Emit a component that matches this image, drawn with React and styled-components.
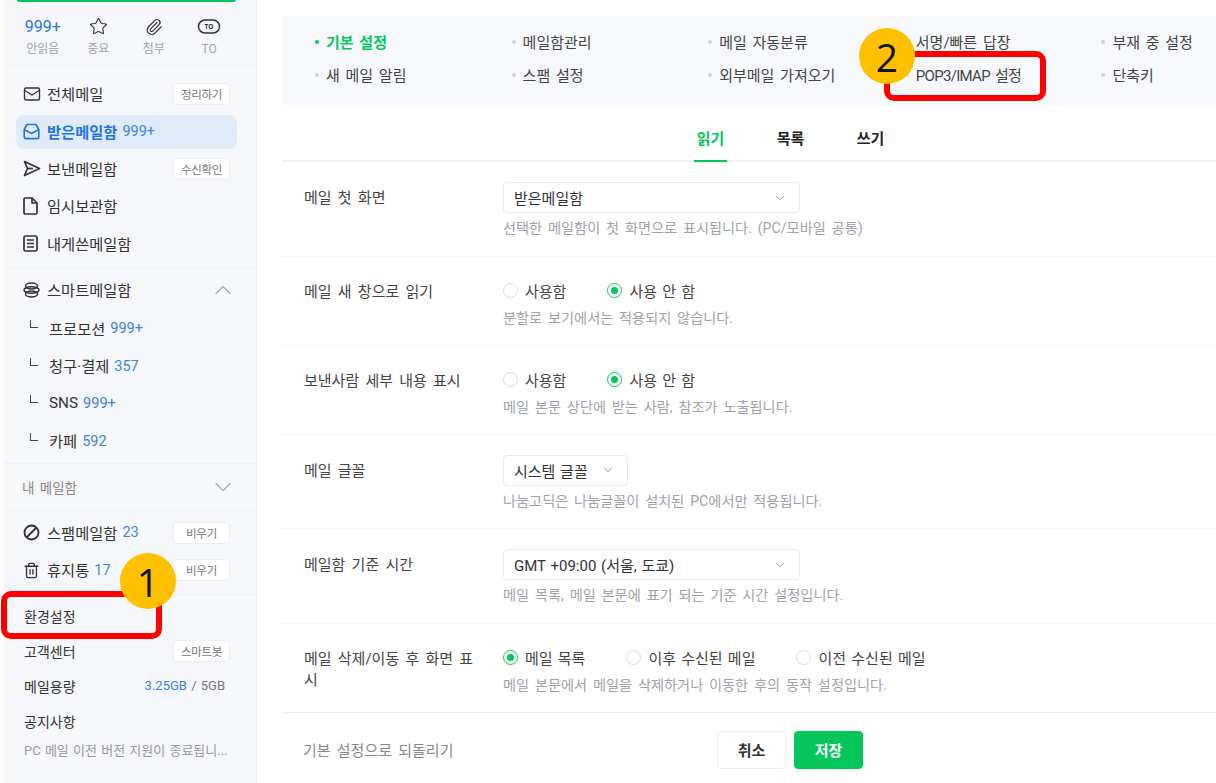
import React from 'react';
import styled, { createGlobalStyle } from 'styled-components';
import { ChevronDown, ChevronUp, Mail, Paperclip, Star, Trash2 } from 'lucide-react';

const GlobalStyle = createGlobalStyle`
  html, body {
    margin: 0;
    height: 783px;
    overflow: hidden;
    background: #fff;
    font-family: Roboto, "Noto Sans CJK KR", sans-serif;
    color: #333;
  }
  * { box-sizing: border-box; }
`;

const Page = styled.div`
  position: relative;
  display: flex;
  width: 1216px;
  height: 783px;
  overflow: hidden;
  background: #fff;
`;

// Left mail navigation
const Sidebar = styled.aside`
  width: 254px;
  height: 783px;
  margin-left: 3px;
  flex-shrink: 0;
  background: #f6f7fb;
  border-right: 1px solid #eceef3;
`;

const WriteBar = styled.div`
  height: 2px;
  margin: 0 20px 0 14px;
  background: #03c75a;
  border-radius: 0 0 2px 2px;
`;

const QuickRow = styled.div`
  display: flex;
  height: 64px;
  padding: 13px 0 0 12px;
  border-bottom: 1px solid #eef0f4;
`;

const QuickItem = styled.div`
  width: 55.5px;
  display: flex;
  flex-direction: column;
  align-items: center;
`;

const QuickValue = styled.div`
  height: 23px;
  display: flex;
  align-items: center;
  font-size: 16px;
  color: #1f75e8;
`;

const QuickLabel = styled.div`
  margin-top: 2px;
  font-size: 12px;
  line-height: 18px;
  color: #a0a3aa;
`;

const Section = styled.div`
  padding: ${(p) => p.$pad || '4px 0 4px'};
  border-bottom: ${(p) => (p.$last ? 'none' : '1px solid #eef0f4')};
`;

const Row = styled.div`
  display: flex;
  align-items: center;
  height: ${(p) => (p.$active ? '34px' : '37.5px')};
  margin: ${(p) => (p.$active ? '2px 19px 1.5px 13px' : '0')};
  padding: ${(p) => (p.$active ? '0 7px' : '0 26px 0 20px')};
  background: ${(p) => (p.$active ? '#dfebf8' : 'transparent')};
  border-radius: 8px;
  color: ${(p) => (p.$active ? '#1f75e8' : '#333')};
`;

const IconSlot = styled.span`
  width: 24px;
  height: 18px;
  flex-shrink: 0;
  display: flex;
  align-items: center;
  color: ${(p) => p.$color || '#333'};
`;

const RowName = styled.span`
  padding-bottom: 2px;
  font-size: 15.3px;
  font-weight: ${(p) => (p.$bold ? 700 : 400)};
  color: ${(p) => p.$color || 'inherit'};
`;

const Count = styled.span`
  margin-left: 5px;
  font-size: 14.5px;
  color: #3b82e0;
`;

const Pill = styled.span`
  margin-left: auto;
  width: 57px;
  height: 22px;
  display: flex;
  align-items: center;
  justify-content: center;
  background: #fff;
  border: 1px solid #eceef2;
  border-radius: 4px;
  font-size: 11.5px;
  letter-spacing: -0.3px;
  color: #777;
`;

const Caret = styled.span`
  margin: 0 -7px 0 auto;
  display: flex;
  color: #a5a8b0;
`;

const SubRow = styled.div`
  display: flex;
  align-items: center;
  height: 37.5px;
  padding: 2px 0 0 27px;
`;

const Elbow = styled.span`
  width: 8px;
  height: 8px;
  margin: -9px 11px 0 0;
  border-left: 1.5px solid #444;
  border-bottom: 1.5px solid #444;
`;

const MutedTitle = styled.div`
  display: flex;
  align-items: center;
  height: 46px;
  padding: 0 26px 0 19px;
  font-size: 13.5px;
  word-spacing: 2px;
  color: #888;
`;

const InfoRow = styled.div`
  display: flex;
  align-items: center;
  height: 35px;
  padding: 0 31px 0 21px;
  font-size: 14px;
  color: #333;
`;

const InfoPill = styled(Pill)`
  margin-right: -5px;
`;

const Quota = styled.span`
  margin-left: auto;
  font-size: 13px;
  word-spacing: 1px;
  color: #777;
`;

const QuotaUsed = styled.span`
  color: #3b82e0;
`;

const Notice = styled.div`
  margin: 2px 0 0 21px;
  font-size: 13px;
  word-spacing: 1px;
  white-space: nowrap;
  color: #999;
`;

// Settings area
const Main = styled.main`
  width: 934px;
  margin-left: 25px;
  flex-shrink: 0;
  padding-top: 16px;
`;

const MenuPanel = styled.nav`
  display: grid;
  grid-template-columns: repeat(5, 196.6px);
  grid-auto-rows: 33px;
  align-items: center;
  height: 89px;
  padding: 9px 0 0 33px;
  background: #f7f8fc;
  border-radius: 4px;
`;

const MenuItem = styled.div`
  display: flex;
  align-items: center;
  gap: 7px;
  font-size: 15px;
  word-spacing: 2px;
  letter-spacing: ${(p) => (p.$tight ? '-0.7px' : '0')};
  font-weight: ${(p) => (p.$active ? 600 : 400)};
  color: ${(p) => (p.$active ? '#03c75a' : '#444')};
  &::before {
    content: '';
    width: 4px;
    height: 4px;
    border-radius: 50%;
    background: ${(p) => (p.$active ? '#03c75a' : '#cfd2da')};
  }
`;

const Tabs = styled.div`
  display: flex;
  gap: 47px;
  height: 57px;
  padding-left: 412px;
  border-bottom: 2px solid #f1f2f4;
`;

const Tab = styled.div`
  height: 57px;
  width: 33px;
  padding-top: 22px;
  text-align: center;
  font-size: 15px;
  font-weight: 700;
  white-space: nowrap;
  color: ${(p) => (p.$active ? '#03c75a' : '#222')};
  border-bottom: 2px solid ${(p) => (p.$active ? '#03c75a' : 'transparent')};
`;

const SettingRow = styled.section`
  display: flex;
  padding: ${(p) => (p.$radio ? '18px 0 18px 22px' : '20px 0 18.5px 22px')};
  border-bottom: 1px solid #f3f4f6;
`;

const SettingLabel = styled.div`
  width: 199px;
  flex-shrink: 0;
  padding: ${(p) => (p.$radio ? '7px' : '6px')} 24px 0 0;
  font-size: 15px;
  line-height: 21px;
  word-spacing: 2.5px;
  color: #444;
`;

const SettingBody = styled.div`
  flex: 1;
`;

const Select = styled.div`
  display: flex;
  align-items: center;
  justify-content: space-between;
  width: ${(p) => p.$width}px;
  height: 31px;
  padding: 0 12px 0 10px;
  background: #fff;
  border: 1px solid #e9eaee;
  border-radius: 4px;
  font-size: 15px;
  word-spacing: 1px;
  color: #333;
`;

const Hint = styled.div`
  margin-top: ${(p) => (p.$radio ? '3px' : '6px')};
  font-size: 14.2px;
  line-height: 18px;
  word-spacing: 2.3px;
  color: #a0a2a8;
`;

const RadioGroup = styled.div`
  display: flex;
  align-items: center;
  height: 31px;
  gap: 41px;
`;

const RadioOption = styled.label`
  display: flex;
  align-items: center;
  gap: 7px;
  font-size: 15px;
  word-spacing: 1.5px;
  color: #444;
`;

const RadioMark = styled.span`
  position: relative;
  width: 15px;
  height: 15px;
  border-radius: 50%;
  border: 1px solid ${(p) => (p.$on ? '#03c75a' : '#d9dce6')};
  background: #fff;
  &::after {
    content: '';
    display: ${(p) => (p.$on ? 'block' : 'none')};
    position: absolute;
    inset: 3px;
    border-radius: 50%;
    background: #03c75a;
  }
`;

const Footer = styled.footer`
  display: flex;
  align-items: center;
  height: 70px;
  padding: 6px 0 0 21px;
  border-top: 1px solid #eceef0;
  margin-top: -1px;
`;

const ResetLink = styled.div`
  width: 414px;
  padding-bottom: 2px;
  font-size: 15px;
  word-spacing: 2.5px;
  color: #888;
`;

const Button = styled.button`
  width: 69px;
  height: 38px;
  margin-right: 8px;
  padding: 0 0 2px;
  font-family: inherit;
  font-size: 15px;
  font-weight: 700;
  border-radius: 4px;
  border: 1px solid ${(p) => (p.$primary ? '#03c75a' : '#eceef0')};
  background: ${(p) => (p.$primary ? '#03c75a' : '#fff')};
  color: ${(p) => (p.$primary ? '#fff' : '#333')};
`;

// Tutorial annotations drawn on top of the screenshot
const Callout = styled.div`
  position: absolute;
  left: ${(p) => p.$x}px;
  top: ${(p) => p.$y}px;
  width: ${(p) => p.$w}px;
  height: ${(p) => p.$h}px;
  border: 6px solid #ff0000;
  border-radius: 10px;
`;

const Marker = styled.div`
  position: absolute;
  left: ${(p) => p.$x}px;
  top: ${(p) => p.$y}px;
  width: 56px;
  height: 56px;
  display: flex;
  align-items: center;
  justify-content: center;
  border-radius: 50%;
  background: #ffc000;
  font-family: "Open Sans", "Noto Sans", sans-serif;
  font-size: 39px;
  color: #111;
`;

// Hand drawn icons for what lucide doesn't have
const ToIcon = () => (
  <svg width="24" height="18" viewBox="0 0 24 18" fill="none" stroke="#333" strokeWidth="1.5">
    <rect x="1.5" y="2" width="21" height="13" rx="6.5" />
    <text x="12" y="11" textAnchor="middle" fontSize="6.5" fontWeight="700" fill="#333" stroke="none" fontFamily="Noto Sans">TO</text>
  </svg>
);

const InboxIcon = () => (
  <svg width="17" height="17" viewBox="0 0 17 17" fill="none" stroke="#1f75e8" strokeWidth="1.6" strokeLinejoin="round">
    <path d="M1.2 6.5 4 1.5h9l2.8 5v7.5a1.6 1.6 0 0 1-1.6 1.6H2.8A1.6 1.6 0 0 1 1.2 14z" />
    <path d="M1.2 6.5 8.5 10.5 15.8 6.5" />
  </svg>
);

const PlaneIcon = () => (
  <svg width="18" height="17" viewBox="0 0 18 17" fill="none" stroke="#333" strokeWidth="1.7" strokeLinejoin="round">
    <path d="M1.5 1.5 16.5 8.5 1.5 15.5 4.5 8.5z" />
    <path d="M4.5 8.5H10" />
  </svg>
);

const DraftIcon = () => (
  <svg width="15" height="18" viewBox="0 0 15 18" fill="none" stroke="#333" strokeWidth="1.7" strokeLinejoin="round">
    <path d="M1 2.2A1.2 1.2 0 0 1 2.2 1H9l5 5v9.8a1.2 1.2 0 0 1-1.2 1.2H2.2A1.2 1.2 0 0 1 1 15.8z" />
    <path d="M9 1v5h5" />
  </svg>
);

const NoteIcon = () => (
  <svg width="15" height="17" viewBox="0 0 15 17" fill="none" stroke="#333" strokeWidth="1.7">
    <rect x="1" y="1" width="13" height="15" rx="1.5" />
    <path d="M4 5h7M4 8.5h7M4 12h7" strokeWidth="1.3" />
  </svg>
);

const StackIcon = () => (
  <svg width="17" height="16" viewBox="0 0 17 16" fill="none" stroke="#333" strokeWidth="1.5">
    <ellipse cx="8.5" cy="4" rx="6" ry="3" />
    <ellipse cx="8.5" cy="8" rx="7.5" ry="3.2" />
    <ellipse cx="8.5" cy="12" rx="6" ry="3" />
  </svg>
);

const BlockedIcon = () => (
  <svg width="17" height="17" viewBox="0 0 17 17" fill="none" stroke="#333" strokeWidth="1.8">
    <circle cx="8.5" cy="8.5" r="7" />
    <path d="M13.5 3.5 3.5 13.5" />
  </svg>
);

const menu = [
  { name: '기본 설정', active: true }, { name: '메일함관리' }, { name: '메일 자동분류' }, { name: '서명/빠른 답장' }, { name: '부재 중 설정' },
  { name: '새 메일 알림' }, { name: '스팸 설정' }, { name: '외부메일 가져오기' }, { name: 'POP3/IMAP 설정', tight: true }, { name: '단축키' },
];

const smartBoxes = [
  ['프로모션', '999+'],
  ['청구·결제', '357'],
  ['SNS', '999+'],
  ['카페', '592'],
];

function RadioSetting({ label, options, selected, hint }) {
  return (
    <SettingRow $radio>
      <SettingLabel $radio>{label}</SettingLabel>
      <SettingBody>
        <RadioGroup>
          {options.map((option) => (
            <RadioOption key={option}>
              <RadioMark $on={option === selected} />
              {option}
            </RadioOption>
          ))}
        </RadioGroup>
        <Hint $radio>{hint}</Hint>
      </SettingBody>
    </SettingRow>
  );
}

function SelectSetting({ label, value, width, hint }) {
  return (
    <SettingRow>
      <SettingLabel>{label}</SettingLabel>
      <SettingBody>
        <Select $width={width}>
          {value}
          <ChevronDown size={14} strokeWidth={1.4} color="#777" />
        </Select>
        <Hint>{hint}</Hint>
      </SettingBody>
    </SettingRow>
  );
}

export default function App() {
  return (
    <Page>
      <GlobalStyle />
      <Sidebar>
        <WriteBar />
        <QuickRow>
          <QuickItem>
            <QuickValue>999+</QuickValue>
            <QuickLabel>안읽음</QuickLabel>
          </QuickItem>
          <QuickItem>
            <QuickValue><Star size={19} strokeWidth={1.4} color="#333" /></QuickValue>
            <QuickLabel>중요</QuickLabel>
          </QuickItem>
          <QuickItem>
            <QuickValue><Paperclip size={18} strokeWidth={1.6} color="#333" /></QuickValue>
            <QuickLabel>첨부</QuickLabel>
          </QuickItem>
          <QuickItem>
            <QuickValue><ToIcon /></QuickValue>
            <QuickLabel>TO</QuickLabel>
          </QuickItem>
        </QuickRow>

        <Section $pad="9px 0 4px">
          <Row>
            <IconSlot><Mail size={18} strokeWidth={1.8} /></IconSlot>
            <RowName>전체메일</RowName>
            <Pill>정리하기</Pill>
          </Row>
          <Row $active>
            <IconSlot $color="#1f75e8"><InboxIcon /></IconSlot>
            <RowName $bold>받은메일함</RowName>
            <Count>999+</Count>
          </Row>
          <Row>
            <IconSlot><PlaneIcon /></IconSlot>
            <RowName>보낸메일함</RowName>
            <Pill>수신확인</Pill>
          </Row>
          <Row>
            <IconSlot><DraftIcon /></IconSlot>
            <RowName>임시보관함</RowName>
          </Row>
          <Row>
            <IconSlot><NoteIcon /></IconSlot>
            <RowName>내게쓴메일함</RowName>
          </Row>
        </Section>

        <Section $pad="4px 0 4px">
          <Row>
            <IconSlot><StackIcon /></IconSlot>
            <RowName>스마트메일함</RowName>
            <Caret><ChevronUp size={28} strokeWidth={1} /></Caret>
          </Row>
          {smartBoxes.map(([name, count]) => (
            <SubRow key={name}>
              <Elbow />
              <RowName>{name}</RowName>
              <Count>{count}</Count>
            </SubRow>
          ))}
        </Section>

        <Section $pad="0">
          <MutedTitle>
            내 메일함
            <Caret><ChevronDown size={28} strokeWidth={1} /></Caret>
          </MutedTitle>
        </Section>

        <Section $pad="3px 0 5px">
          <Row>
            <IconSlot><BlockedIcon /></IconSlot>
            <RowName>스팸메일함</RowName>
            <Count>23</Count>
            <Pill>비우기</Pill>
          </Row>
          <Row>
            <IconSlot><Trash2 size={17} strokeWidth={1.9} /></IconSlot>
            <RowName>휴지통</RowName>
            <Count>17</Count>
            <Pill>비우기</Pill>
          </Row>
        </Section>

        <Section $last $pad="3px 0 0">
          <InfoRow>환경설정</InfoRow>
          <InfoRow>고객센터<InfoPill>스마트봇</InfoPill></InfoRow>
          <InfoRow>
            메일용량
            <Quota><QuotaUsed>3.25GB</QuotaUsed> / 5GB</Quota>
          </InfoRow>
          <InfoRow>공지사항</InfoRow>
          <Notice>PC 메일 이전 버전 지원이 종료됩니...</Notice>
        </Section>
      </Sidebar>

      <Main>
        <MenuPanel>
          {menu.map(({ name, active, tight }) => (
            <MenuItem key={name} $active={active} $tight={tight}>{name}</MenuItem>
          ))}
        </MenuPanel>

        <Tabs>
          <Tab $active>읽기</Tab>
          <Tab>목록</Tab>
          <Tab>쓰기</Tab>
        </Tabs>

        <SelectSetting label="메일 첫 화면" value="받은메일함" width={297} hint="선택한 메일함이 첫 화면으로 표시됩니다. (PC/모바일 공통)" />
        <RadioSetting label="메일 새 창으로 읽기" options={['사용함', '사용 안 함']} selected="사용 안 함" hint="분할로 보기에서는 적용되지 않습니다." />
        <RadioSetting label="보낸사람 세부 내용 표시" options={['사용함', '사용 안 함']} selected="사용 안 함" hint="메일 본문 상단에 받는 사람, 참조가 노출됩니다." />
        <SelectSetting label="메일 글꼴" value="시스템 글꼴" width={125} hint="나눔고딕은 나눔글꼴이 설치된 PC에서만 적용됩니다." />
        <SelectSetting label="메일함 기준 시간" value="GMT +09:00 (서울, 도쿄)" width={297} hint="메일 목록, 메일 본문에 표기 되는 기준 시간 설정입니다." />
        <RadioSetting label="메일 삭제/이동 후 화면 표시" options={['메일 목록', '이후 수신된 메일', '이전 수신된 메일']} selected="메일 목록" hint="메일 본문에서 메일을 삭제하거나 이동한 후의 동작 설정입니다." />

        <Footer>
          <ResetLink>기본 설정으로 되돌리기</ResetLink>
          <Button>취소</Button>
          <Button $primary>저장</Button>
        </Footer>
      </Main>

      <Callout $x={1} $y={591} $w={161} $h={48} />
      <Marker $x={120} $y={553}>1</Marker>
      <Callout $x={884} $y={51} $w={162} $h={50} />
      <Marker $x={859} $y={28}>2</Marker>
    </Page>
  );
}
